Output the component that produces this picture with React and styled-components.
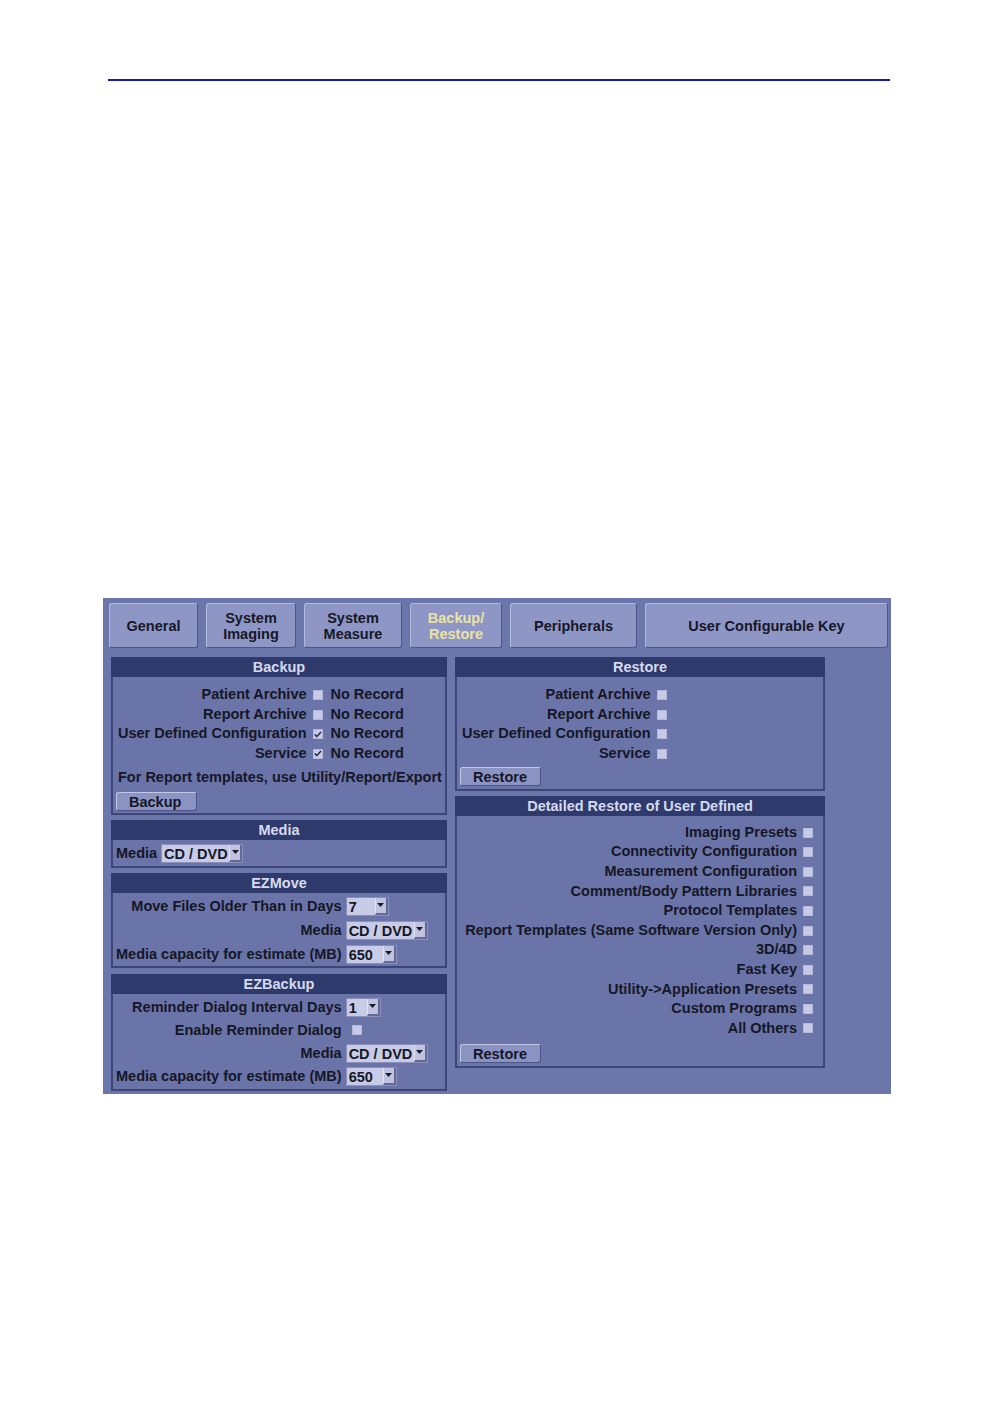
import React from 'react';
import styled, { createGlobalStyle } from 'styled-components';

const GlobalStyle = createGlobalStyle`
  html, body {
    margin: 0;
    padding: 0;
    background: #ffffff;
  }
  body {
    font-family: "Liberation Sans", Arial, sans-serif;
  }
`;

const Page = styled.div`
  width: 998px;
  height: 1418px;
  padding-top: 79px;
  box-sizing: border-box;
`;

const Rule = styled.div`
  margin-left: 108px;
  width: 782px;
  height: 2px;
  background: #1818b8;
`;

const Screen = styled.div`
  margin: 517px 0 0 103px;
  width: 788px;
  height: 496px;
  box-sizing: border-box;
  padding: 5px 0 0 6px;
  background: #6b76aa;
  font-weight: bold;
  font-size: 14.5px;
  color: #151727;
`;

const Tabs = styled.div`
  display: flex;
  gap: 8px;
`;

const Tab = styled.div`
  width: ${p => p.w}px;
  height: 45px;
  box-sizing: border-box;
  display: flex;
  align-items: center;
  justify-content: center;
  text-align: center;
  line-height: 16px;
  background: #8e96c5;
  border: 1px solid;
  border-color: #b3b9dc #4b558a #4b558a #b3b9dc;
  border-radius: 3px;
  color: ${p => (p.active ? '#ebe3a4' : '#161828')};
`;

const Content = styled.div`
  display: flex;
  gap: 8px;
  margin: 9px 0 0 2px;
  align-items: flex-start;
`;

const Column = styled.div`
  width: ${p => p.w}px;
  display: flex;
  flex-direction: column;
`;

const Section = styled.div`
  border: 2px solid #3c4679;
  border-top: none;
  background: #6a74a8;
  margin-top: ${p => p.mt || 0}px;
`;

const Header = styled.div`
  height: 20px;
  line-height: 21px;
  background: #2f3a6c;
  color: #d6daf0;
  text-align: center;
  margin: 0 -2px;
`;

const Body = styled.div`
  padding: ${p => p.pad || '6px 4px 2px 3px'};
`;

const CheckGrid = styled.div`
  display: grid;
  grid-template-columns: max-content 10px ${p => (p.status ? 'max-content' : '')};
  column-gap: 6px;
  justify-content: ${p => (p.align === 'right' ? 'end' : 'start')};
  margin-left: 2px;
  margin-right: ${p => p.mr || 0}px;
`;

const Label = styled.div`
  height: ${p => p.h || 19.7}px;
  line-height: ${p => p.h || 19.7}px;
  text-align: right;
  white-space: nowrap;
`;

const Status = styled.div`
  height: 19.7px;
  line-height: 19.7px;
  margin-left: 2px;
  white-space: nowrap;
`;

const BoxCell = styled.div`
  display: flex;
  align-items: center;
`;

const Box = styled.div`
  width: 10px;
  height: 10px;
  background: #c6cae6;
  box-sizing: border-box;
  border: 1px solid #b2b7db;
  display: flex;
  align-items: center;
  justify-content: center;
`;

const Note = styled.div`
  margin: 3px 0 0 2px;
  height: 20px;
  line-height: 20px;
  white-space: nowrap;
`;

const Button = styled.div`
  width: 81px;
  height: 19px;
  box-sizing: border-box;
  margin-top: ${p => p.mt || 5}px;
  background: #8b93c2;
  border: 1px solid;
  border-color: #c2c7e4 #4a5488 #4a5488 #c2c7e4;
  border-radius: 3px;
  padding-left: 12px;
  line-height: 18px;
`;

const FormGrid = styled.div`
  display: grid;
  grid-template-columns: max-content max-content;
  column-gap: 4px;
  row-gap: ${p => p.gap || 5}px;
  align-items: center;
`;

const InlineRow = styled.div`
  display: flex;
  align-items: center;
  gap: 4px;
`;

const Spacer = styled.span`
  width: ${p => p.w}px;
`;

const SelectBox = styled.div`
  width: ${p => p.w}px;
  height: 19px;
  box-sizing: border-box;
  display: flex;
  background: #c7cbe5;
  border: 1px solid #8a90bb;
`;

const SelectText = styled.div`
  flex: 1;
  padding-left: 2px;
  line-height: 18px;
  white-space: nowrap;
  overflow: hidden;
`;

const Arrow = styled.div`
  width: 13px;
  box-sizing: border-box;
  background: #bfc3e0;
  border-left: 1px solid #e0e3f3;
  border-right: 2px solid #646a98;
  border-bottom: 2px solid #646a98;
  display: flex;
  align-items: center;
  justify-content: center;
`;

const Check = ({ checked }) => (
  <BoxCell>
    <Box>
      {checked && (
        <svg width="8" height="7" viewBox="0 0 8 7">
          <path d="M0.8 3.6 L2.8 5.6 L7 1" fill="none" stroke="#1b1d2e" strokeWidth="1.4" />
        </svg>
      )}
    </Box>
  </BoxCell>
);

const Select = ({ w, value }) => (
  <SelectBox w={w}>
    <SelectText>{value}</SelectText>
    <Arrow>
      <svg width="7" height="4" viewBox="0 0 7 4">
        <path d="M0 0 H7 L3.5 4 Z" fill="#181a2a" />
      </svg>
    </Arrow>
  </SelectBox>
);

const backupRows = [
  ['Patient Archive', false],
  ['Report Archive', false],
  ['User Defined Configuration', true],
  ['Service', true],
];

const restoreRows = ['Patient Archive', 'Report Archive', 'User Defined Configuration', 'Service'];

const detailedRows = [
  'Imaging Presets',
  'Connectivity Configuration',
  'Measurement Configuration',
  'Comment/Body Pattern Libraries',
  'Protocol Templates',
  'Report Templates (Same Software Version Only)',
  '3D/4D',
  'Fast Key',
  'Utility->Application Presets',
  'Custom Programs',
  'All Others',
];

const tabs = [
  { w: 89, label: 'General' },
  { w: 90, label: ['System', 'Imaging'] },
  { w: 98, label: ['System', 'Measure'] },
  { w: 92, label: ['Backup/', 'Restore'], active: true },
  { w: 127, label: 'Peripherals' },
  { w: 243, label: 'User Configurable Key' },
];

export default function App() {
  return (
    <>
      <GlobalStyle />
      <Page>
        <Rule />
        <Screen>
          <Tabs>
            {tabs.map((t, i) => (
              <Tab key={i} w={t.w} active={t.active}>
                {Array.isArray(t.label) ? (
                  <span>
                    {t.label[0]}
                    <br />
                    {t.label[1]}
                  </span>
                ) : (
                  t.label
                )}
              </Tab>
            ))}
          </Tabs>

          <Content>
            <Column w={336}>
              <Section>
                <Header>Backup</Header>
                <Body pad="8px 4px 2px 3px">
                  <CheckGrid status>
                    {backupRows.map(([label, checked]) => (
                      <React.Fragment key={label}>
                        <Label>{label}</Label>
                        <Check checked={checked} />
                        <Status>No Record</Status>
                      </React.Fragment>
                    ))}
                  </CheckGrid>
                  <Note>For Report templates, use Utility/Report/Export</Note>
                  <Button>Backup</Button>
                </Body>
              </Section>

              <Section mt={5}>
                <Header>Media</Header>
                <Body pad="4px 4px 3px 3px">
                  <InlineRow>
                    <span>Media</span>
                    <Select w={82} value="CD / DVD" />
                  </InlineRow>
                </Body>
              </Section>

              <Section mt={5}>
                <Header>EZMove</Header>
                <Body pad="4px 4px 2px 3px">
                  <FormGrid gap={5}>
                    <Label h={19}>Move Files Older Than in Days</Label>
                    <Select w={43} value="7" />
                    <Label h={19}>Media</Label>
                    <Select w={82} value="CD / DVD" />
                    <Label h={19}>Media capacity for estimate (MB)</Label>
                    <Select w={51} value="650" />
                  </FormGrid>
                </Body>
              </Section>

              <Section mt={6}>
                <Header>EZBackup</Header>
                <Body pad="4px 4px 3px 3px">
                  <FormGrid gap={4}>
                    <Label h={19}>Reminder Dialog Interval Days</Label>
                    <Select w={35} value="1" />
                    <Label h={19}>Enable Reminder Dialog</Label>
                    <InlineRow>
                      <Spacer w={2} />
                      <Check />
                    </InlineRow>
                    <Label h={19}>Media</Label>
                    <Select w={82} value="CD / DVD" />
                    <Label h={19}>Media capacity for estimate (MB)</Label>
                    <Select w={51} value="650" />
                  </FormGrid>
                </Body>
              </Section>
            </Column>

            <Column w={370}>
              <Section>
                <Header>Restore</Header>
                <Body pad="8px 4px 3px 3px">
                  <CheckGrid>
                    {restoreRows.map(label => (
                      <React.Fragment key={label}>
                        <Label>{label}</Label>
                        <Check />
                      </React.Fragment>
                    ))}
                  </CheckGrid>
                  <Button mt={3}>Restore</Button>
                </Body>
              </Section>

              <Section mt={5}>
                <Header>Detailed Restore of User Defined</Header>
                <Body pad="7px 4px 3px 3px">
                  <CheckGrid align="right" mr={6}>
                    {detailedRows.map(label => (
                      <React.Fragment key={label}>
                        <Label h={19.6}>{label}</Label>
                        <Check />
                      </React.Fragment>
                    ))}
                  </CheckGrid>
                  <Button mt={6}>Restore</Button>
                </Body>
              </Section>
            </Column>
          </Content>
        </Screen>
      </Page>
    </>
  );
}
